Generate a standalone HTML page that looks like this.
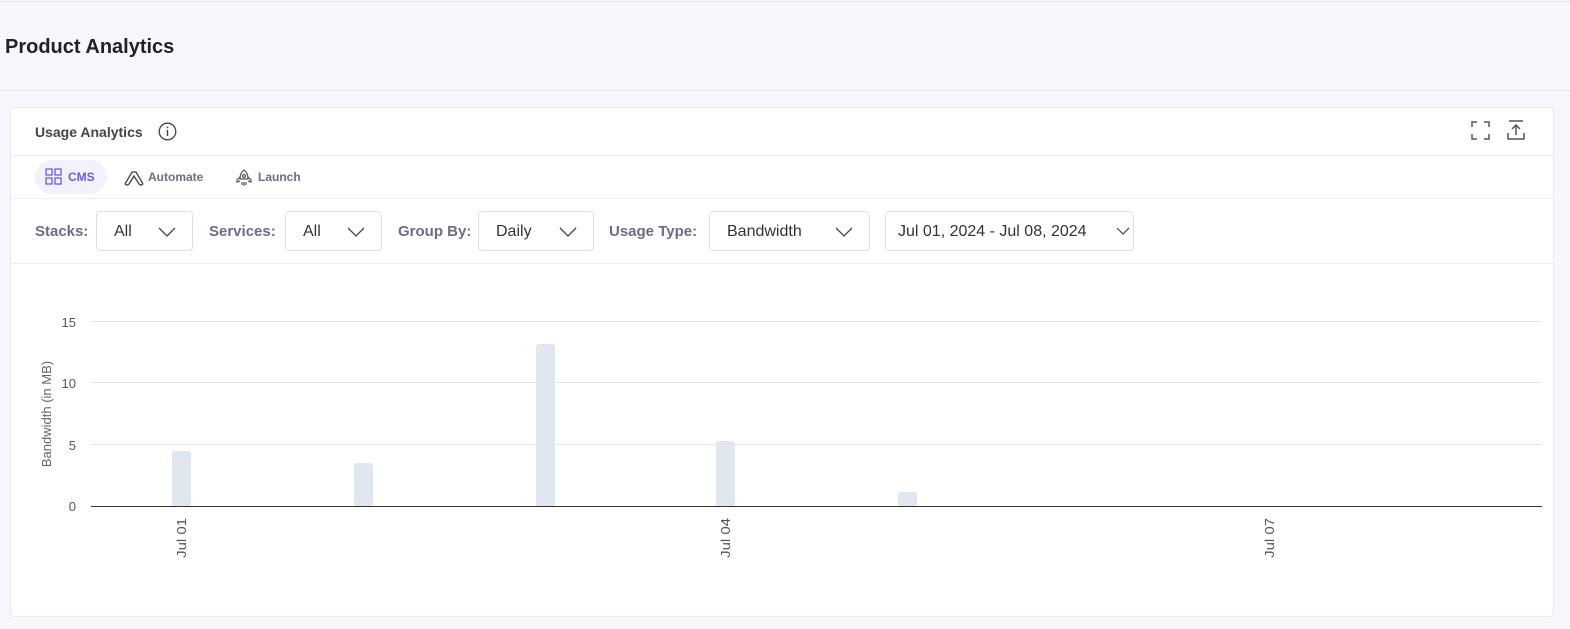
<!DOCTYPE html>
<html><head><meta charset="utf-8"><style>
*{box-sizing:border-box;margin:0;padding:0}
body{width:1570px;height:629px;background:#f7f8fc;font-family:"Liberation Sans",sans-serif;position:relative;overflow:hidden;color:#222}
.top{position:absolute;left:0;top:1px;width:1570px;height:90px;border-top:1px solid #e3e5ea;border-bottom:1px solid #e3e5ea;background:#f7f8fc}
.title{position:absolute;left:5px;top:34px;font-size:20px;font-weight:bold;color:#222}
.card{position:absolute;left:10px;top:107px;width:1544px;height:510px;background:#fff;border:1px solid #e8eaef;border-radius:4px}
.hl{position:absolute;left:0;width:100%;height:1px;background:#edeef2}
.lbl{position:absolute;font-size:15px;color:#6b6d85;font-weight:bold;top:115px}
.sel{position:absolute;top:103px;height:40px;border:1px solid #dde0e8;border-radius:4px;font-size:16px;color:#333;padding:11px 0 0 17px}
.sel svg{position:absolute;right:16px;top:15px}
.tab{position:absolute;top:52px;height:34px;font-size:12px;font-weight:bold;color:#6b6d85;padding-top:10px}
</style></head><body>
<div class="top"><div class="title">Product Analytics</div></div>
<div class="card">
  <div style="position:absolute;left:24px;top:16px;font-size:14px;font-weight:bold;color:#444">Usage Analytics</div>
  <svg style="position:absolute;left:147px;top:14px" width="19" height="19" viewBox="0 0 19 19"><circle cx="9.5" cy="9.5" r="8.3" fill="none" stroke="#444" stroke-width="1.3"/><line x1="9.5" y1="8" x2="9.5" y2="14" stroke="#444" stroke-width="1.4"/><circle cx="9.5" cy="5.5" r="0.9" fill="#444"/></svg>
  <svg style="position:absolute;left:1460px;top:13px" width="19" height="19" viewBox="0 0 19 19" fill="none" stroke="#555" stroke-width="1.5"><path d="M1 6V1h5M13 1h5v5M18 13v5h-5M6 18H1v-5"/></svg>
  <svg style="position:absolute;left:1496px;top:12px" width="18" height="20" viewBox="0 0 18 20" fill="none" stroke="#555" stroke-width="1.5"><path d="M2 1h14M9 5v10M5 9l4-4 4 4M1 13v6h16v-6"/></svg>
  <div class="hl" style="top:47px"></div>
  <div class="tab" style="left:24px;width:72px;background:#f3f1fe;border-radius:17px;color:#6c5ce7;padding-left:33px">CMS
    <svg style="position:absolute;left:10px;top:8px" width="17" height="17" viewBox="0 0 17 17" fill="none" stroke="#6c5ce7" stroke-width="1.3"><rect x="1" y="1" width="6" height="6"/><rect x="10" y="1" width="6" height="6"/><rect x="1" y="10" width="6" height="6"/><rect x="10" y="10" width="6" height="6"/></svg></div>
  <div class="tab" style="left:113px;padding-left:24px">Automate
    <svg style="position:absolute;left:0;top:10px" width="20" height="16" viewBox="0 0 20 16" fill="none" stroke="#444" stroke-width="1.3"><path d="M1 14L8 2h4l7 12M5 14l5-8 5 8M1 14q2 2 4 0M15 14q2 2 4 0"/></svg></div>
  <div class="tab" style="left:225px;padding-left:22px">Launch
    <svg style="position:absolute;left:0;top:9px" width="16" height="18" viewBox="0 0 16 18" fill="none" stroke="#555" stroke-width="1.2"><path d="M8 1c3 2 4 5 4 9H4c0-4 1-7 4-9zM4 8L1 11v2l3-1M12 8l3 3v2l-3-1M6 13v3M10 13v3M8 13v4"/><circle cx="8" cy="7" r="1.5"/></svg></div>
  <div class="hl" style="top:90px"></div>
  <div class="lbl" style="left:24px">Stacks:</div>
  <div class="sel" style="left:85px;width:97px">All<svg width="18" height="10"><path d="M1 1l8 8 8-8" fill="none" stroke="#444" stroke-width="1.3"/></svg></div>
  <div class="lbl" style="left:198px">Services:</div>
  <div class="sel" style="left:274px;width:97px">All<svg width="18" height="10"><path d="M1 1l8 8 8-8" fill="none" stroke="#444" stroke-width="1.3"/></svg></div>
  <div class="lbl" style="left:387px">Group By:</div>
  <div class="sel" style="left:467px;width:116px">Daily<svg width="18" height="10"><path d="M1 1l8 8 8-8" fill="none" stroke="#444" stroke-width="1.3"/></svg></div>
  <div class="lbl" style="left:598px">Usage Type:</div>
  <div class="sel" style="left:698px;width:161px">Bandwidth<svg width="18" height="10"><path d="M1 1l8 8 8-8" fill="none" stroke="#444" stroke-width="1.3"/></svg></div>
  <div class="sel" style="left:874px;width:249px;padding-left:12px">Jul 01, 2024 - Jul 08, 2024<svg style="right:3px" width="14" height="9"><path d="M1 1l6 6 6-6" fill="none" stroke="#444" stroke-width="1.2"/></svg></div>
  <div class="hl" style="top:155px"></div>
</div>
<svg style="position:absolute;left:0;top:0" width="1570" height="629">
  <g stroke="#e6e7ea" stroke-width="1"><line x1="91" y1="321.5" x2="1542" y2="321.5"/><line x1="91" y1="382.5" x2="1542" y2="382.5"/><line x1="91" y1="444.5" x2="1542" y2="444.5"/></g>
  <g fill="#e1e7ef">
    <rect x="172" y="451" width="19" height="56" rx="3"/>
    <rect x="354" y="463" width="19" height="44" rx="3"/>
    <rect x="536" y="344" width="19" height="163" rx="3"/>
    <rect x="716" y="441" width="19" height="66" rx="3"/>
    <rect x="898" y="492" width="19" height="15" rx="3"/>
  </g>
  <line x1="91" y1="506.5" x2="1542" y2="506.5" stroke="#333" stroke-width="1"/>
  <g font-family="Liberation Sans,sans-serif" font-size="13" fill="#555" text-anchor="end">
    <text x="76" y="327">15</text><text x="76" y="388">10</text><text x="76" y="450">5</text><text x="76" y="511">0</text>
    <text transform="translate(186,518) rotate(-90) scale(1.15,1)">Jul 01</text>
    <text transform="translate(730,518) rotate(-90) scale(1.15,1)">Jul 04</text>
    <text transform="translate(1274,518) rotate(-90) scale(1.15,1)">Jul 07</text>
  </g>
  <text transform="translate(51,414) rotate(-90)" text-anchor="middle" font-family="Liberation Sans,sans-serif" font-size="13" fill="#666">Bandwidth (in MB)</text>
</svg>
</body></html>
